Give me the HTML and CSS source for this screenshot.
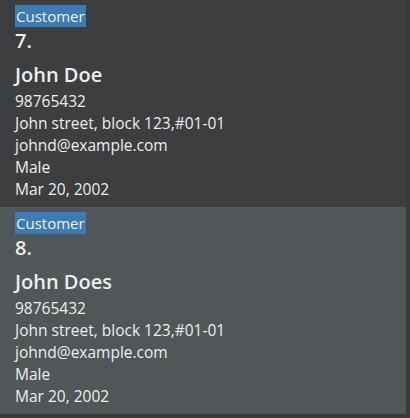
FILE: index.html
```html
<!DOCTYPE html>
<html>
<head>
<meta charset="utf-8">
<link rel="stylesheet" href="styles.css">
</head>
<body>
<div class="list">
  <div class="card card-even">
    <div class="tags"><span class="tag">Customer</span></div>
    <div class="num">7.</div>
    <div class="name">John Doe</div>
    <div class="line">98765432</div>
    <div class="line">John street, block 123,#01-01</div>
    <div class="line">johnd@example.com</div>
    <div class="line">Male</div>
    <div class="line">Mar 20, 2002</div>
  </div>
  <div class="card card-odd">
    <div class="tags"><span class="tag">Customer</span></div>
    <div class="num">8.</div>
    <div class="name">John Does</div>
    <div class="line">98765432</div>
    <div class="line">John street, block 123,#01-01</div>
    <div class="line">johnd@example.com</div>
    <div class="line">Male</div>
    <div class="line">Mar 20, 2002</div>
  </div>
</div>
</body>
</html>
```
FILE: styles.css
```css
html, body {
  margin: 0;
  padding: 0;
  background: #383a3b;
  width: 410px;
  height: 418px;
  overflow: hidden;
}
body {
  font-family: "Open Sans", "Noto Sans", sans-serif;
  color: #eeeeee;
}
.list {
  width: 406px;
  display: flex;
  flex-direction: column;
}
.card {
  height: 207px;
  box-sizing: border-box;
  padding: 5px 0 0 15px;
}
.card-even { background: #3c3e3f; }
.card-odd { background: #515658; }
.tags {
  display: flex;
  height: 22px;
}
.tag {
  background: #3e7bb0;
  color: #eeeeee;
  font-size: 15px;
  line-height: 22px;
  padding: 0 1px;
}
.num {
  font-size: 20px;
  font-weight: 600;
  line-height: 28px;
  margin-bottom: 6px;
}
.name {
  font-size: 20px;
  font-weight: 600;
  line-height: 28px;
  margin-bottom: 1px;
}
.line {
  font-size: 15.5px;
  line-height: 22px;
}
```
